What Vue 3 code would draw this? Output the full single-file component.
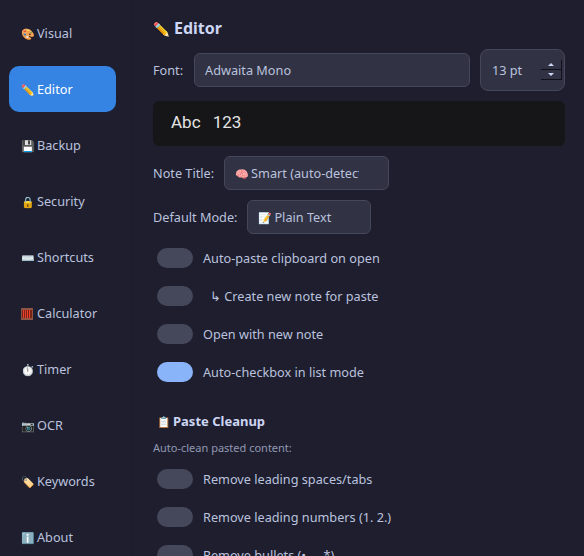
<script setup>
const tabs = [
  { icon: '🎨', name: 'Visual' },
  { icon: '✏️', name: 'Editor', active: true },
  { icon: '💾', name: 'Backup' },
  { icon: '🔒', name: 'Security' },
  { icon: '⌨️', name: 'Shortcuts' },
  { icon: '', name: 'Calculator', abacus: true },
  { icon: '⏱️', name: 'Timer' },
  { icon: '📷', name: 'OCR' },
  { icon: '🏷️', name: 'Keywords' },
  { icon: 'ℹ️', name: 'About' }
]

const abacusBars = [2.5, 4.5, 6.5, 8.5]

const editorOptions = [
  { label: 'Auto-paste clipboard on open', on: false },
  { label: '↳ Create new note for paste', on: false, sub: true },
  { label: 'Open with new note', on: false },
  { label: 'Auto-checkbox in list mode', on: true }
]

const cleanupOptions = [
  { label: 'Remove leading spaces/tabs' },
  { label: 'Remove leading numbers (1. 2.)' },
  { label: 'Remove bullets (•, -, *)' }
]
</script>

<template>
  <div class="window">
    <nav class="sidebar">
      <div v-for="tab in tabs" :key="tab.name" class="tab" :class="{ active: tab.active }">
        <svg v-if="tab.abacus" class="abacus" width="12" height="12" viewBox="0 0 12 12">
          <rect x="0" y="0" width="12" height="12" rx="0.5" fill="#8f5444" />
          <rect x="1" y="2" width="10" height="8" fill="#7a2418" />
          <line v-for="x in abacusBars" :key="x" :x1="x" y1="2" :x2="x" y2="10" stroke="#e8402a" stroke-width="1" />
        </svg>
        <span v-else class="emoji">{{ tab.icon }}</span>{{ tab.name }}
      </div>
    </nav>

    <main class="content">
      <h1 class="title"><span class="emoji big">✏️</span>Editor</h1>

      <div class="font-row">
        <label>Font:</label>
        <div class="field font-field">Adwaita Mono</div>
        <div class="spin">
          <span>13 pt</span>
          <div class="spin-buttons">
            <div class="spin-btn"><i class="up"></i></div>
            <div class="spin-btn"><i class="down"></i></div>
          </div>
        </div>
      </div>

      <div class="preview">Abc 123</div>

      <div class="row">
        <label>Note Title:</label>
        <div class="field title-field"><span class="clip"><span class="emoji">🧠</span>Smart (auto-detect)</span></div>
      </div>
      <div class="row">
        <label>Default Mode:</label>
        <div class="field mode-field"><span class="emoji">📝</span>Plain Text</div>
      </div>

      <div class="toggles">
        <div v-for="opt in editorOptions" :key="opt.label" class="toggle-row">
          <div class="toggle" :class="{ on: opt.on }"></div>
          <span :class="{ sub: opt.sub }">{{ opt.label }}</span>
        </div>
      </div>

      <h2 class="section"><span class="emoji">📋</span>Paste Cleanup</h2>
      <p class="hint">Auto-clean pasted content:</p>

      <div class="toggles">
        <div v-for="opt in cleanupOptions" :key="opt.label" class="toggle-row">
          <div class="toggle"></div>
          <span>{{ opt.label }}</span>
        </div>
      </div>
    </main>
  </div>
</template>

<style>
html, body {
  margin: 0;
  height: 100%;
  overflow: hidden;
  background: #1e1e2e;
}
</style>

<style scoped>
.window {
  display: flex;
  width: 584px;
  height: 556px;
  overflow: hidden;
  background: #1e1e2e;
  color: #cdd6f4;
  font-family: "Noto Sans", sans-serif;
  font-size: 12.7px;
}

.emoji {
  display: inline-block;
  width: 12px;
  margin-right: 4px;
  font-size: 11px;
  line-height: 1;
  font-weight: 400;
}

.emoji.big {
  width: 16px;
  margin-right: 5px;
  font-size: 13.5px;
}

.abacus {
  margin-right: 4px;
  vertical-align: -2px;
}

.sidebar {
  width: 132px;
  flex-shrink: 0;
  box-sizing: border-box;
  padding: 10px 15px 0 9px;
  border-right: 1px solid #1b1b29;
}

.tab {
  height: 46px;
  margin-bottom: 10px;
  padding-left: 12px;
  line-height: 46px;
  border-radius: 10px;
  color: #bac2de;
  white-space: nowrap;
}

.tab.active {
  background: #3584e4;
  color: #ffffff;
}

.content {
  flex: 1;
  min-width: 0;
  box-sizing: border-box;
  padding: 17px 19px 0 21px;
}

.title {
  margin: 0 0 9px;
  font-size: 16px;
  line-height: 23px;
  font-weight: 700;
  color: #cdd6f4;
}

label {
  color: #bac2de;
  white-space: nowrap;
}

.font-row {
  display: flex;
  align-items: center;
  height: 42px;
}

.field {
  box-sizing: border-box;
  height: 34px;
  padding-left: 10px;
  line-height: 32px;
  background: #313244;
  border: 1px solid #45475a;
  border-radius: 6px;
  color: #bac2de;
  white-space: nowrap;
}

.font-field {
  flex: 1;
  margin-left: 11px;
}

.spin {
  position: relative;
  box-sizing: border-box;
  width: 85px;
  height: 42px;
  margin-left: 10px;
  padding-left: 11px;
  line-height: 40px;
  background: #313244;
  border: 1px solid #45475a;
  border-radius: 8px;
  color: #bac2de;
}

.spin-buttons {
  position: absolute;
  top: 10px;
  right: 2px;
  width: 20px;
  border-right: 1px solid #11111b;
}

.spin-btn {
  position: relative;
  height: 9px;
  background: #313244;
  border-bottom: 1px solid #11111b;
}

.spin-btn i {
  position: absolute;
  left: 7px;
  top: 3px;
  width: 0;
  height: 0;
  border-left: 3px solid transparent;
  border-right: 3px solid transparent;
}

.spin-btn i.up {
  border-bottom: 3px solid #cdd6f4;
}

.spin-btn i.down {
  border-top: 3px solid #cdd6f4;
}

.preview {
  box-sizing: border-box;
  height: 45px;
  margin-top: 10px;
  padding-left: 18px;
  line-height: 43px;
  background: #161618;
  border-radius: 6px;
  color: #e4e4e4;
  font-family: Roboto, sans-serif;
  font-size: 17px;
  word-spacing: 8px;
}

.row {
  display: flex;
  align-items: center;
  gap: 10px;
  margin-top: 10px;
}

.title-field {
  width: 165px;
}

.clip {
  display: block;
  width: 124px;
  overflow: hidden;
}

.mode-field {
  width: 124px;
}

.toggles {
  display: flex;
  flex-direction: column;
  gap: 18px;
  margin-top: 14px;
  padding-left: 4px;
}

.toggle-row {
  display: flex;
  align-items: center;
  gap: 10px;
  height: 20px;
  color: #bac2de;
  white-space: nowrap;
}

.toggle {
  width: 36px;
  height: 20px;
  border-radius: 10px;
  background: #45475a;
}

.toggle.on {
  background: #89b4fa;
}

.sub {
  padding-left: 7px;
}

.section {
  margin: 28px 0 0 4px;
  font-size: 13px;
  line-height: 22px;
  font-weight: 700;
  color: #cdd6f4;
}

.section .emoji {
  margin-right: 4px;
}

.hint {
  margin: 8px 0 0;
  font-size: 11px;
  line-height: 15px;
  color: #a6adc8;
  opacity: 0.85;
}

.hint + .toggles {
  margin-top: 14px;
}
</style>
